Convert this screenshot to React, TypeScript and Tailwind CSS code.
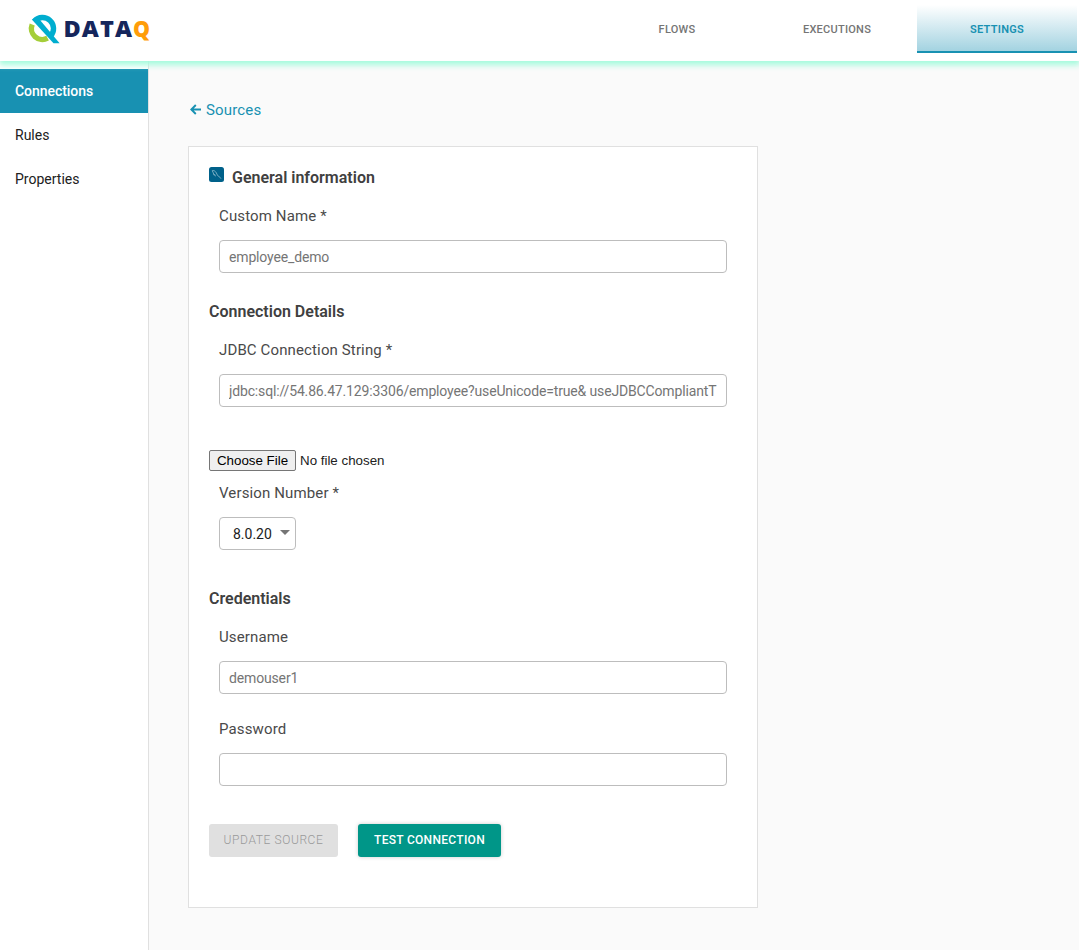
import React from "react";

function Logo() {
  return (
    <svg width="126" height="34" viewBox="0 0 126 34" className="ml-[27px] mt-3">
      <path d="M5.2 12.4A11 11 0 0 0 20.6 26.2" fill="none" stroke="#a5ce39" strokeWidth="5.4" />
      <path d="M7.4 9A11 11 0 0 1 23.6 24" fill="none" stroke="#00adcf" strokeWidth="5.4" />
      <path d="M4.8 7.4L10.2 4.8L32.6 31.2H26.5Z" fill="#00adcf" />
      <g fontFamily="Open Sans, sans-serif" fontWeight="800" fontSize="23.5">
        <text x="36.5" y="25" textLength="68.5" lengthAdjust="spacing" fill="#15265c">
          DATA
        </text>
        <text x="106" y="25" textLength="17" lengthAdjust="spacingAndGlyphs" fill="#ff9d0a">
          Q
        </text>
      </g>
    </svg>
  );
}

function Heading({ children, className = "" }: { children: React.ReactNode; className?: string }) {
  return <h2 className={`flex h-5 items-center text-[16px] font-semibold leading-5 text-[#404040] ${className}`}>{children}</h2>;
}

function Label({ children, className = "" }: { children: React.ReactNode; className?: string }) {
  return <div className={`ml-2.5 h-5 text-[15px] leading-5 tracking-[0.13px] text-[#4a4a4a] ${className}`}>{children}</div>;
}

function Field({ placeholder = "", label }: { placeholder?: string; label: string }) {
  return (
    <input
      aria-label={label}
      placeholder={placeholder}
      className="ml-2.5 mt-3.5 block h-[33px] w-[508px] rounded-[4px] border border-[#bdbdbd] bg-white px-[9px] text-[14px] tracking-[-0.15px] outline-none placeholder:text-[#757575]"
    />
  );
}

export default function App() {
  return (
    <div className="flex h-[950px] w-full flex-col overflow-hidden bg-[#fafafa] font-[Roboto,sans-serif]">
      <header className="relative z-10 flex h-[61px] shrink-0 justify-between bg-white shadow-[0_3px_6px_1px_#a3fbdc]">
        <Logo />
        <nav className="mr-0.5 flex h-[53px] pt-[5px] text-[11px] font-medium tracking-[0.25px] text-[#757575]">
          <a className="flex w-40 items-center justify-center pt-0.5">FLOWS</a>
          <a className="flex w-40 items-center justify-center pt-0.5">EXECUTIONS</a>
          <a className="flex w-40 items-center justify-center border-b-2 border-[#1891b2] bg-linear-to-b from-white to-[#a3d3e1] pt-1 font-semibold text-[#1891b2]">
            SETTINGS
          </a>
        </nav>
      </header>
      <div className="flex min-h-0 grow">
        <aside className="w-[149px] shrink-0 border-r border-[#e0e0e0] bg-white pt-2 text-[14px] text-[#212121]">
          <a className="flex h-11 items-center bg-[#1891b2] pl-[15px] font-medium tracking-[-0.05px] text-white">Connections</a>
          <a className="flex h-11 items-center pl-[15px]">Rules</a>
          <a className="flex h-11 items-center pl-[15px]">Properties</a>
        </aside>
        <main className="pl-[39px] pt-[39px]">
          <a className="flex h-5 items-center text-[15px] tracking-[0.15px] text-[#1891b2]">
            <svg width="12" height="12" viewBox="0 0 12 12" className="ml-0.5 mr-1" fill="none" stroke="currentColor" strokeWidth="1.9">
              <path d="M11 5.5H1.5M5.8 1L1.3 5.5L5.8 10" />
            </svg>
            Sources
          </a>
          <section className="mt-[26px] h-[762px] w-[570px] border border-[#e0e0e0] bg-white pl-5 pt-[21px]">
            <Heading>
              <svg width="15" height="15" viewBox="0 0 15 15" className="mb-2 mr-2">
                <rect width="15" height="15" rx="2.5" fill="#00618a" />
                <path
                  d="M3.2 3.6C5 3.2 6.2 4 7.3 5.8C8.2 7.8 8.8 9 10 9.7C10.8 10.1 11.6 10.3 11.2 10.8L12 11.7M3.3 3.8C4.3 4.8 4.2 6.5 5 8.2L5.8 7.5L6.4 9.3"
                  fill="none"
                  stroke="#a9cbd9"
                  strokeWidth=".7"
                />
              </svg>
              General information
            </Heading>
            <Label className="mt-[18px]">Custom Name *</Label>
            <Field label="Custom Name" placeholder="employee_demo" />
            <Heading className="mt-[29px]">Connection Details</Heading>
            <Label className="mt-[18px]">JDBC Connection String *</Label>
            <Field label="JDBC Connection String" placeholder="jdbc:sql://54.86.47.129:3306/employee?useUnicode=true& useJDBCCompliantT" />
            <div className="mt-[43px] flex h-[21px] items-center font-['Liberation_Sans',sans-serif] text-[13.333px] text-[#212121]">
              <button className="mr-1 h-[21px] w-[87px] rounded-[2px] border border-[#767676] bg-[#efefef] leading-[19px] text-black">Choose File</button>
              <span>No file chosen</span>
            </div>
            <Label className="mt-3">Version Number *</Label>
            <button className="ml-2.5 mt-3.5 flex h-[33px] w-[77px] items-center rounded-[4px] border border-[#bdbdbd] pl-[13px] text-[14px] text-[#212121]">
              <span className="w-[47px] pt-0.5 text-left">8.0.20</span>
              <svg width="10" height="5" viewBox="0 0 10 5" className="mb-0.5 shrink-0" fill="#757575">
                <path d="M0 0H10L5 5Z" />
              </svg>
            </button>
            <Heading className="mt-[39px]">Credentials</Heading>
            <Label className="mt-[18px]">Username</Label>
            <Field label="Username" placeholder="demouser1" />
            <Label className="mt-[25px]">Password</Label>
            <Field label="Password" />
            <div className="mt-[38px] flex gap-5 text-[12px]">
              <button className="h-[33px] w-[129px] rounded-[3px] bg-[#e0e0e0] pb-0.5 font-light tracking-[0.6px] text-[#999]">UPDATE SOURCE</button>
              <button className="h-[33px] w-[143px] rounded-[3px] bg-[#009688] pb-0.5 font-medium tracking-[0.3px] text-white shadow-[0_0_4px_rgba(0,0,0,0.2)]">
                TEST CONNECTION
              </button>
            </div>
          </section>
        </main>
      </div>
    </div>
  );
}
